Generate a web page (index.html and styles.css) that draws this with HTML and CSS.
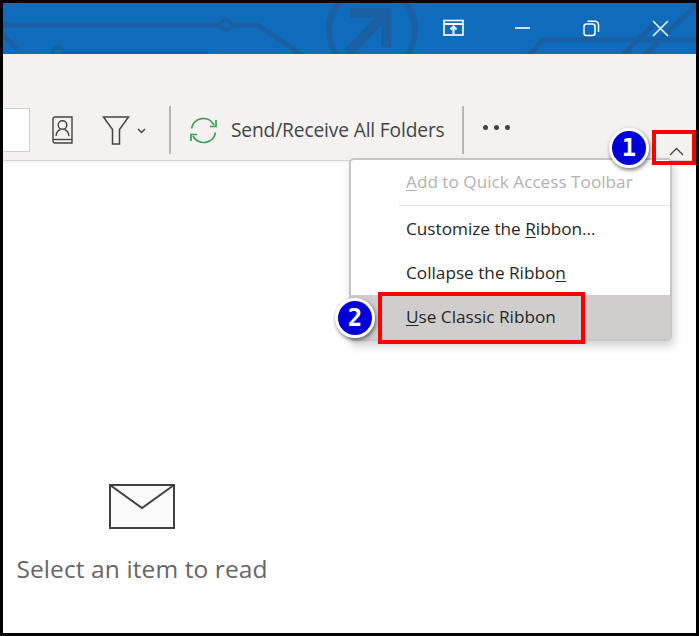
FILE: index.html
```html
<!DOCTYPE html>
<html lang="en">
<head>
<meta charset="utf-8">
<title>Use Classic Ribbon</title>
<link rel="stylesheet" href="styles.css">
</head>
<body>
<div class="frame">
  <header class="titlebar">
    <svg class="circuit" width="693" height="51" viewBox="0 0 693 51" fill="none" stroke="#1b5fa3" stroke-width="5">
      <path d="M0 22H218M228 22H254L302 54"/>
      <circle cx="223" cy="22" r="5" stroke-width="4"/>
      <path d="M0 32L14 46"/>
      <circle cx="55" cy="49" r="5" stroke-width="4"/>
      <path d="M60 50H205"/>
      <circle cx="369" cy="27" r="43" stroke-width="6"/>
      <path d="M345 50L383 10" stroke-width="10"/>
      <path d="M347 10H383V44" stroke-width="10"/>
      <path d="M524 54L540 37H693M618 54L654 18M640 54L693 2" stroke-width="5"/>
    </svg>
    <div class="winctrls">
      <button class="winbtn"><svg width="22" height="18" viewBox="0 0 22 18" fill="none" stroke="#fff" stroke-width="1.6"><rect x="1" y="1.5" width="19" height="14.5"/><path d="M1 5H20" stroke-width="2"/><path d="M10.500 15V8M7.500 10.500L10.500 7.500L13.500 10.500" stroke-width="2"/></svg></button>
      <button class="winbtn"><svg width="18" height="4" viewBox="0 0 18 4"><path d="M1 2H16" stroke="#fff" stroke-width="1.600"/></svg></button>
      <button class="winbtn"><svg width="17" height="17" viewBox="0 0 17 17" fill="none" stroke="#fff" stroke-width="1.500"><rect x="1" y="4" width="11" height="11.500" rx="2.500"/><path d="M4.500 1.200H12A3.500 3.500 0 0 1 15.500 4.700V12"/></svg></button>
      <button class="winbtn"><svg width="17" height="17" viewBox="0 0 17 17" fill="none" stroke="#fff" stroke-width="1.500"><path d="M1 1L16 16M16 1L1 16"/></svg></button>
    </div>
  </header>

  <section class="ribbon">
    <div class="toolbar">
      <div class="searchbox"></div>
      <svg class="ico-book" width="22" height="29" viewBox="0 0 22 29" fill="none" stroke="#444" stroke-width="1.400"><path d="M3 1H20V27H3A2 2 0 0 1 1 25V3A2 2 0 0 1 3 1Z"/><path d="M1 23.500H20"/><circle cx="10.500" cy="9" r="4.300"/><path d="M4 20C4.500 15.500 7 14 8.500 13.500M17 20C16.500 15.500 14 14 12.500 13.500"/></svg>
      <svg class="ico-filter" width="28" height="29" viewBox="0 0 28 29" fill="none" stroke="#444" stroke-width="1.500"><path d="M1.500 1H26.500L17.500 13.500V28H10.500V13.500Z"/></svg>
      <svg class="ico-caret" width="9" height="6" viewBox="0 0 9 6" fill="none" stroke="#444" stroke-width="1.500"><path d="M1 1L4.500 4.500L8 1"/></svg>
      <span class="vsep sep-a"></span>
      <svg class="ico-sync" width="29" height="27" viewBox="0 0 29 27" fill="none" stroke="#3a9e55" stroke-width="1.700"><path d="M2.500 11.500A12 12 0 0 1 25 8M26.500 15.500A12 12 0 0 1 4 19"/><path d="M27 3V9.500H21M2 24V17.500H8"/></svg>
      <span class="sendlabel">Send/Receive All Folders</span>
      <span class="vsep sep-b"></span>
      <span class="dots"><i></i><i></i><i></i></span>
    </div>
    <div class="collapse-row">
      <svg width="15" height="9" viewBox="0 0 15 9" fill="none" stroke="#444" stroke-width="1.300"><path d="M1 8L7.500 1.500L14 8"/></svg>
    </div>
  </section>

  <main class="reading">
    <div class="empty">
      <svg class="envelope" width="66" height="45" viewBox="0 0 66 45"><rect x="1" y="1" width="64" height="43" fill="#fafafa" stroke="#404040" stroke-width="2"/><path d="M1 1L33 24L65 1" fill="none" stroke="#404040" stroke-width="2"/></svg>
      <p class="empty-text">Select an item to read</p>
    </div>
  </main>

  <nav class="menu">
    <div class="mi disabled"><span><u>A</u>dd to Quick Access Toolbar</span></div>
    <div class="menu-rule"></div>
    <div class="mi"><span>Customize the <u>R</u>ibbon...</span></div>
    <div class="mi"><span>Collapse the Ribbo<u>n</u></span></div>
    <div class="mi active"><span><u>U</u>se Classic Ribbon</span></div>
  </nav>

  <div class="redbox box-one"></div>
  <div class="redbox box-two"></div>
  <div class="badge badge-one">1</div>
  <div class="badge badge-two">2</div>
</div>
</body>
</html>
```

FILE: styles.css
```css
* { box-sizing: border-box; }
html, body { margin: 0; padding: 0; background: #fff; }
.frame {
  position: relative;
  width: 699px;
  height: 636px;
  border: 3px solid #000;
  overflow: hidden;
  display: flex;
  flex-direction: column;
  font-family: "Open Sans", "Noto Sans", sans-serif;
}
.titlebar {
  position: relative;
  flex: 0 0 51px;
  background: #0f6cbd;
  display: flex;
  justify-content: flex-end;
  align-items: flex-start;
  overflow: hidden;
}
.circuit { position: absolute; left: 0; top: 0; }
.winctrls { position: relative; display: flex; margin: 14px 1px 0 0; }
.winbtn {
  width: 69px;
  height: 22px;
  padding: 0;
  border: 0;
  background: none;
  display: flex;
  align-items: center;
  justify-content: center;
}
.ribbon {
  flex: 0 0 107px;
  background: #f3f2f1;
  border-bottom: 1px solid #d4d3d2;
  display: flex;
  flex-direction: column;
  box-shadow: 0 2px 4px rgba(0,0,0,.06);
  position: relative;
}
.toolbar {
  margin-top: 52px;
  height: 48px;
  display: flex;
  align-items: center;
  color: #444;
}
.searchbox {
  width: 27px;
  height: 44px;
  background: #fff;
  border: 1px solid #cfcfcf;
  border-left: 0;
}
.ico-book { margin-left: 22px; }
.ico-filter { margin-left: 28px; }
.ico-caret { margin-left: 7px; margin-top: 1px; }
.vsep { width: 2px; height: 48px; background: #b6b6b6; }
.sep-a { margin-left: 23px; }
.ico-sync { margin-left: 18px; }
.sendlabel { margin-left: 13px; margin-top: -2px; font-size: 19.200px; color: #444; white-space: nowrap; letter-spacing: -.15px; }
.sep-b { margin-left: 17px; }
.dots { display: flex; gap: 6px; margin-left: 19px; margin-top: -6px; }
.dots i { width: 5px; height: 5px; border-radius: 50%; background: #444; }
.collapse-row {
  position: absolute;
  right: 6px;
  bottom: -1px;
  width: 27px;
  height: 19px;
  display: flex;
  align-items: center;
  justify-content: center;
}
.reading { flex: 1; background: #fff; display: flex; }
.empty {
  width: 278px;
  padding-top: 323px;
  display: flex;
  flex-direction: column;
  align-items: center;
}
.envelope { display: block; }
.empty-text { margin: 24px 0 0; font-size: 24.500px; color: #666; line-height: 32px; white-space: nowrap; letter-spacing: .1px; }
.menu {
  position: absolute;
  left: 346px;
  top: 155px;
  width: 323px;
  height: 183px;
  background: #fff;
  border: 2px solid #c6c6c6;
  border-radius: 5px;
  box-shadow: 2px 5px 10px rgba(0,0,0,.18);
  overflow: hidden;
  font-size: 17.200px;
  color: #262626;
}
.mi { height: 44px; padding-left: 55px; display: flex; align-items: center; white-space: nowrap; }
.mi span { margin-top: -2px; }
.mi u { text-underline-offset: 2px; }
.disabled { color: #b5b0ae; height: 45px; }
.menu-rule { height: 1px; background: #e2e2e2; margin: 0 0 1px 48px; }
.active { background: #d0cecd; height: 46px; }
.active span { margin-top: -4px; }
.redbox { position: absolute; border: 4px solid #f00; }
.box-one { left: 649px; top: 127px; width: 44px; height: 35px; }
.box-two { left: 375px; top: 289px; width: 207px; height: 52px; }
.badge {
  position: absolute;
  width: 40px;
  height: 40px;
  border-radius: 50%;
  background: #0000d8;
  border: 3px solid #fff;
  box-shadow: 1px 2px 4px rgba(0,0,0,.55);
  color: #fff;
  font-family: "DejaVu Sans Mono", monospace;
  font-weight: 700;
  font-size: 24px;
  display: flex;
  align-items: center;
  justify-content: center;
}
.badge-one { left: 606px; top: 125px; }
.badge-two { left: 332px; top: 295px; }
```
